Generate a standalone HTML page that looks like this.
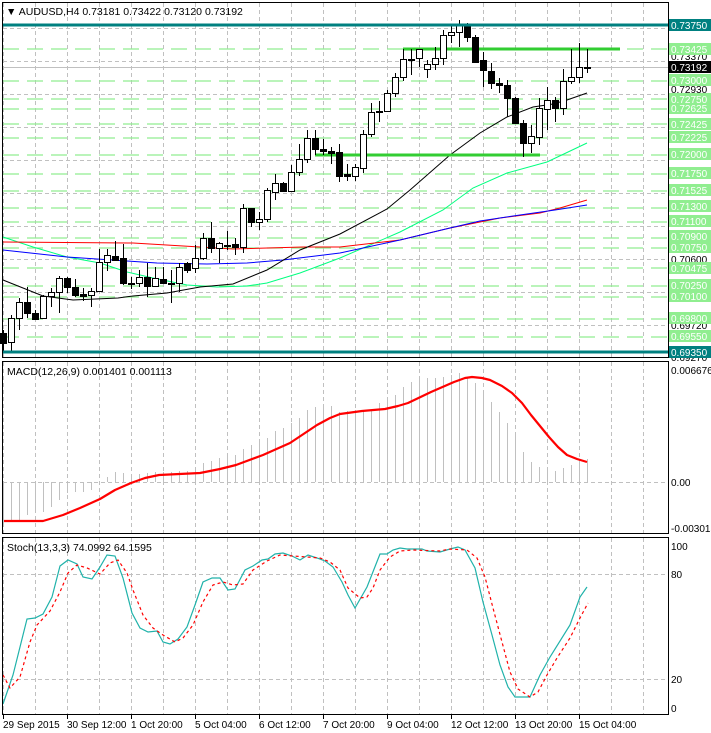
<!DOCTYPE html>
<html><head><meta charset="utf-8"><style>
html,body{margin:0;padding:0;background:#fff;width:711px;height:733px;overflow:hidden}
svg{display:block}
text{font-family:"Liberation Sans",sans-serif;font-size:10.5px}
.ax text{font-size:10px}
</style></head><body>
<svg id="s" width="711" height="733" viewBox="0 0 711 733" xmlns="http://www.w3.org/2000/svg">
<rect width="711" height="733" fill="#fff"/>
<g id="grid" stroke="#c0c0c0" stroke-dasharray="4,3" stroke-width="1"></g>
<g id="glev" stroke="#90ee90" stroke-width="1.2" stroke-dasharray="16,8"></g>
<line x1="2" y1="67.5" x2="668" y2="67.5" stroke="#c0c0c0"/>
<polyline fill="none" stroke="#00ff7f" stroke-width="1" points="3,237 33,247 67,257 100,263 127,272 153,278 187,285 217,287 247,286 267,283 300,273 340,258 400,232 443,210 473,188 507,173 547,162 587,143"/>
<polyline fill="none" stroke="#ff0000" stroke-width="1" points="3,242 133,243 200,247 233,249 303,247 340,247 400,240 450,228 500,218 540,213 560,208 587,200"/>
<polyline fill="none" stroke="#0000ff" stroke-width="1" points="3,250 67,257 127,261 157,263 207,264 247,263 283,260 340,253 400,240 450,228 480,221 520,215 555,210 587,205"/>
<polyline fill="none" stroke="#000" stroke-width="1" points="3,280 43,296 73,300 118,298 133,296 167,293 200,287 233,284 267,270 300,250 340,234 387,209 410,190 450,155 480,133 507,117 533,107 553,104 567,100 587,93"/>
<line x1="403" y1="49" x2="620" y2="49" stroke="#32cd32" stroke-width="3"/>
<line x1="315" y1="155" x2="540" y2="155" stroke="#32cd32" stroke-width="3"/>
<g id="candles"></g>
<line x1="2" y1="25" x2="668" y2="25" stroke="#008080" stroke-width="3"/>
<line x1="2" y1="352" x2="668" y2="352" stroke="#008080" stroke-width="3"/>
<g id="hist" stroke="#c0c0c0" stroke-width="1"></g>
<polyline fill="none" stroke="#ff0000" stroke-width="2.2" stroke-linejoin="round" points="4,521 43,521 63,515 80,508 100,499 115,490 131,483 145,478 159,475 200,473 220,469 236,465 263,455 290,443 305,433 317,425 330,418 340,414 362,411 385,409 398,406 408,403 431,392 454,382 465,378 472,377 482,378 490,380 502,386 512,393 522,403 531,415 540,426 549,437 558,447 567,455 577,459 587,462"/>
<polyline fill="none" stroke="#20b2aa" stroke-width="1.2" points="3,704 13,675 27,619 35,618 43,614 52,597 60,566 68,560 77,564 83,577 92,579 100,567 107,555 115,556 123,578 132,613 140,628 148,632 157,631 163,642 170,644 178,639 187,627 195,605 203,582 212,578 220,578 228,590 235,589 245,570 253,566 262,560 268,559 275,554 283,553 292,556 300,560 308,555 317,558 325,561 333,567 342,582 348,595 355,608 367,587 380,554 387,554 393,550 400,548 407,549 422,549 427,551 440,552 450,549 458,547 465,550 475,568 483,602 492,635 500,665 508,687 515,697 530,697 540,675 550,657 570,625 580,597 587,587"/>
<polyline fill="none" stroke="#ff0000" stroke-width="1.2" stroke-dasharray="3,3" points="3,675 10,688 20,677 30,642 37,625 50,611 60,592 68,573 77,565 87,568 100,574 110,563 118,560 127,573 133,590 143,615 153,628 163,635 175,642 183,638 193,625 203,602 213,585 223,582 233,585 243,584 253,570 267,561 280,555 293,556 307,557 320,558 330,562 340,570 348,588 360,598 367,597 373,588 380,570 390,557 400,551 413,550 440,551 450,549 467,550 477,558 485,577 493,608 502,642 510,672 518,689 530,697 538,692 547,675 557,658 570,638 580,618 588,603"/>
<g fill="none" stroke="#000" stroke-width="1">
<rect x="2.5" y="2.5" width="666" height="355"/>
<rect x="2.5" y="361.5" width="666" height="172"/>
<rect x="2.5" y="537.5" width="666" height="177"/>
</g>
<text x="6" y="15" fill="#000">▼ AUDUSD,H4  0.73181 0.73422 0.73120 0.73192</text>
<text x="7" y="375" fill="#000">MACD(12,26,9) 0.001401 0.001113</text>
<text x="7" y="551" fill="#000">Stoch(13,3,3) 74.0992 64.1595</text>
<g class="ax">
<g fill="#000">
<text x="671" y="60">0.73370</text>
<text x="671" y="93">0.72930</text>
<text x="671" y="263">0.70600</text>
<text x="671" y="329">0.69720</text>
<text x="671" y="361">0.69270</text>
<text x="671" y="374">0.006676</text>
<text x="671" y="486">0.00</text>
<text x="671" y="532">-0.003013</text>
<text x="671" y="550">100</text>
<text x="671" y="578">80</text>
<text x="671" y="683">20</text>
<text x="671" y="712">0</text>
</g>
<g fill="#90ee90">
<rect x="669" y="43" width="42" height="12"/><rect x="669" y="74" width="42" height="12"/>
<rect x="669" y="93" width="42" height="12"/><rect x="669" y="102" width="42" height="12"/>
<rect x="669" y="118" width="42" height="12"/><rect x="669" y="131" width="42" height="12"/>
<rect x="669" y="148" width="42" height="12"/><rect x="669" y="167" width="42" height="12"/>
<rect x="669" y="184" width="42" height="12"/><rect x="669" y="200" width="42" height="12"/>
<rect x="669" y="215" width="42" height="12"/><rect x="669" y="230" width="42" height="12"/>
<rect x="669" y="241" width="42" height="12"/><rect x="669" y="262" width="42" height="12"/>
<rect x="669" y="279" width="42" height="12"/><rect x="669" y="290" width="42" height="12"/>
<rect x="669" y="312" width="42" height="12"/><rect x="669" y="330" width="42" height="12"/>
</g>
<rect x="669" y="19" width="42" height="12" fill="#008080"/>
<rect x="669" y="346" width="42" height="12" fill="#008080"/>
<rect x="669" y="61" width="42" height="12" fill="#000"/>
<g fill="#fff">
<text x="671" y="29">0.73750</text>
<text x="671" y="53">0.73425</text>
<text x="671" y="71">0.73192</text>
<text x="671" y="84">0.73000</text>
<text x="671" y="103">0.72750</text>
<text x="671" y="112">0.72625</text>
<text x="671" y="128">0.72425</text>
<text x="671" y="141">0.72225</text>
<text x="671" y="158">0.72000</text>
<text x="671" y="177">0.71750</text>
<text x="671" y="194">0.71525</text>
<text x="671" y="210">0.71300</text>
<text x="671" y="225">0.71100</text>
<text x="671" y="240">0.70900</text>
<text x="671" y="251">0.70750</text>
<text x="671" y="272">0.70475</text>
<text x="671" y="289">0.70250</text>
<text x="671" y="300">0.70100</text>
<text x="671" y="322">0.69800</text>
<text x="671" y="340">0.69550</text>
<text x="671" y="356">0.69350</text>
</g>
<g fill="#000">
<text x="3" y="728">29 Sep 2015</text>
<text x="67" y="728">30 Sep 12:00</text>
<text x="131" y="728">1 Oct 20:00</text>
<text x="195" y="728">5 Oct 04:00</text>
<text x="259" y="728">6 Oct 12:00</text>
<text x="323" y="728">7 Oct 20:00</text>
<text x="387" y="728">9 Oct 04:00</text>
<text x="451" y="728">12 Oct 12:00</text>
<text x="515" y="728">13 Oct 20:00</text>
<text x="579" y="728">15 Oct 04:00</text>
</g>
</g>
<g stroke="#000"><line x1="3.5" y1="715" x2="3.5" y2="719"/><line x1="67.5" y1="715" x2="67.5" y2="719"/><line x1="131.5" y1="715" x2="131.5" y2="719"/><line x1="195.5" y1="715" x2="195.5" y2="719"/><line x1="259.5" y1="715" x2="259.5" y2="719"/><line x1="323.5" y1="715" x2="323.5" y2="719"/><line x1="387.5" y1="715" x2="387.5" y2="719"/><line x1="451.5" y1="715" x2="451.5" y2="719"/><line x1="515.5" y1="715" x2="515.5" y2="719"/><line x1="579.5" y1="715" x2="579.5" y2="719"/></g>
</svg>
<script>
var NS="http://www.w3.org/2000/svg";
function L(g,x1,y1,x2,y2,a){var l=document.createElementNS(NS,"line");l.setAttribute("x1",x1);l.setAttribute("y1",y1);l.setAttribute("x2",x2);l.setAttribute("y2",y2);if(a)for(var k in a)l.setAttribute(k,a[k]);g.appendChild(l);}
var grid=document.getElementById("grid");
for(var x=3.5;x<668;x+=32){L(grid,x,3,x,357);L(grid,x,362,x,533);L(grid,x,538,x,714);}
for(var y=28.5;y<357;y+=33){L(grid,3,y,668,y);}
L(grid,3,482.5,668,482.5);L(grid,3,574.5,668,574.5);L(grid,3,679.5,668,679.5);
var gl=document.getElementById("glev");
[49,81,99,109,124,138,155,174,191,208,222,238,248,268,286,297,319,337].forEach(function(y){L(gl,3,y,668,y);});
var C=[[333,343,330,352,1],[318,342,315,352,0],[302,318,298,330,0],[302,313,287,318,1],[313,319,310,320,1],[296,318,295,319,0],[292,296,288,307,0],[278,292,276,313,0],[278,287,277,293,1],[287,295,279,297,1],[294,296,288,301,1],[291,295,288,307,0],[262,291,249,292,0],[255,262,249,271,0],[256,260,241,260,1],[258,283,244,285,1],[283,284,277,289,1],[277,283,270,287,0],[277,286,263,297,1],[278,286,267,286,0],[279,283,267,283,1],[283,284,270,303,1],[267,283,263,292,0],[263,270,262,273,1],[258,268,245,273,0],[238,258,233,260,0],[238,248,222,253,1],[243,248,242,263,0],[245,246,231,250,1],[244,247,238,255,1],[208,247,204,253,0],[208,222,208,227,1],[219,222,212,230,0],[190,219,188,222,0],[183,192,174,200,0],[183,191,182,192,1],[172,191,165,192,0],[159,172,144,176,0],[138,159,130,163,0],[138,149,130,155,1],[149,151,139,155,1],[151,153,147,164,1],[152,176,144,182,1],[174,176,164,181,1],[167,176,164,181,0],[134,168,130,173,0],[112,134,103,137,0],[111,112,101,122,1],[93,111,90,112,0],[77,93,73,97,0],[59,77,49,81,0],[59,60,49,75,1],[49,58,49,67,0],[64,69,60,78,0],[58,64,47,70,0],[35,58,30,65,0],[32,35,25,43,0],[25,32,20,47,0],[25,37,23,42,1],[37,62,35,62,1],[60,70,52,87,1],[71,83,63,89,1],[83,85,78,93,1],[85,98,80,117,1],[98,123,97,123,1],[123,143,120,157,1],[136,143,125,153,0],[108,137,98,145,0],[100,109,87,130,0],[100,108,97,122,1],[81,108,69,115,0],[77,81,49,84,0],[67,77,43,83,0],[67,68,49,73,1]];
var cg=document.getElementById("candles");
C.forEach(function(c,i){var x=3+8*i+0.5;L(cg,x,c[2],x,c[3],{stroke:"#000","stroke-width":1});
var h=Math.max(c[1]-c[0],1);var r=document.createElementNS(NS,"rect");r.setAttribute("x",x-3);r.setAttribute("y",c[0]+0.5);r.setAttribute("width",6);r.setAttribute("height",h);r.setAttribute("fill",c[4]?"#000":"#fff");r.setAttribute("stroke","#000");cg.appendChild(r);});
var H=[525,522,520,515,512,512,507,500,493,492,492,490,482,477,472,473,475,474,473,472,472,472,471,471,468,463,461,458,457,455,449,445,442,438,431,428,423,418,410,407,405,406,412,411,410,410,410,403,398,395,387,382,378,378,378,377,375,373,377,383,392,402,412,423,435,452,462,467,467,471,468,465,462,459];
var hg=document.getElementById("hist");
H.forEach(function(y,i){var x=3+8*i+0.5;L(hg,x,482,x,y);});
</script>
</body></html>
